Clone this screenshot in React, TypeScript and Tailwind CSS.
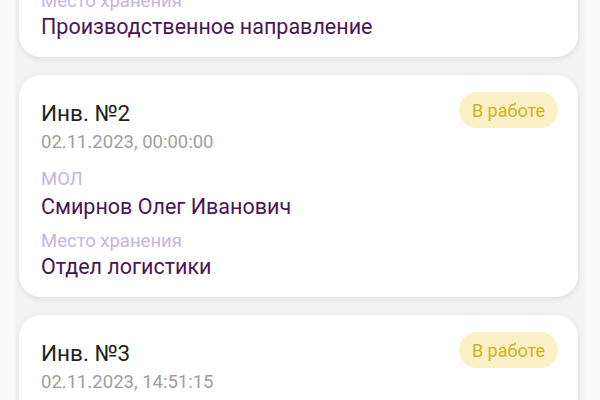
type Item = {
  id: number;
  date: string;
  mol: string;
  place: string;
  status: string;
};

const items: Item[] = [
  { id: 1, date: '01.11.2023, 12:30:00', mol: 'Петров Иван Сергеевич', place: 'Производственное направление', status: 'В работе' },
  { id: 2, date: '02.11.2023, 00:00:00', mol: 'Смирнов Олег Иванович', place: 'Отдел логистики', status: 'В работе' },
  { id: 3, date: '02.11.2023, 14:51:15', mol: 'Кузнецова Анна Петровна', place: 'Склад №1', status: 'В работе' },
];

function InventoryCard({ item }: { item: Item }) {
  return (
    <div className="rounded-[22px] bg-white pl-[22px] pr-[20px] pt-[17px] pb-[17px] shadow-[0_2px_6px_rgba(0,0,0,0.09)]">
      {/* Шапка: номер и статус */}
      <div className="flex items-start justify-between">
        <div className="pt-[7px]">
          <div className="text-[22.5px] leading-[28px] text-[#212121]">Инв. №{item.id}</div>
          <div className="mt-[3px] text-[18.5px] leading-[24px] text-[#9e9e9e]">{item.date}</div>
        </div>
        <span className="flex h-[36px] w-[99px] items-center justify-center rounded-full bg-[#fbf0c6] text-[18px] text-[#d4b01c]">
          {item.status}
        </span>
      </div>

      <div className="mt-[14px] text-[18.5px] leading-[22px] text-[#c6b4e4]">МОЛ</div>
      <div className="mt-[4px] text-[21.5px] leading-[26px] text-[#4a1657]">{item.mol}</div>
      <div className="mt-[10px] text-[18.5px] leading-[22px] text-[#c6b4e4]">Место хранения</div>
      <div className="mt-[2px] text-[21.5px] leading-[26px] text-[#4a1657]">{item.place}</div>
    </div>
  );
}

export default function App() {
  return (
    <div className="h-[400px] w-[600px] overflow-hidden bg-[#fafafa] font-['Roboto',sans-serif]">
      <div className="mx-[16px] -mt-[165px] flex h-[600px] flex-col gap-[18px] bg-[#f3f3f3] pl-[3px] pr-[6px] shadow-[0_0_5px_rgba(0,0,0,0.05)]">
        {items.map((item) => (
          <InventoryCard key={item.id} item={item} />
        ))}
      </div>
    </div>
  );
}
